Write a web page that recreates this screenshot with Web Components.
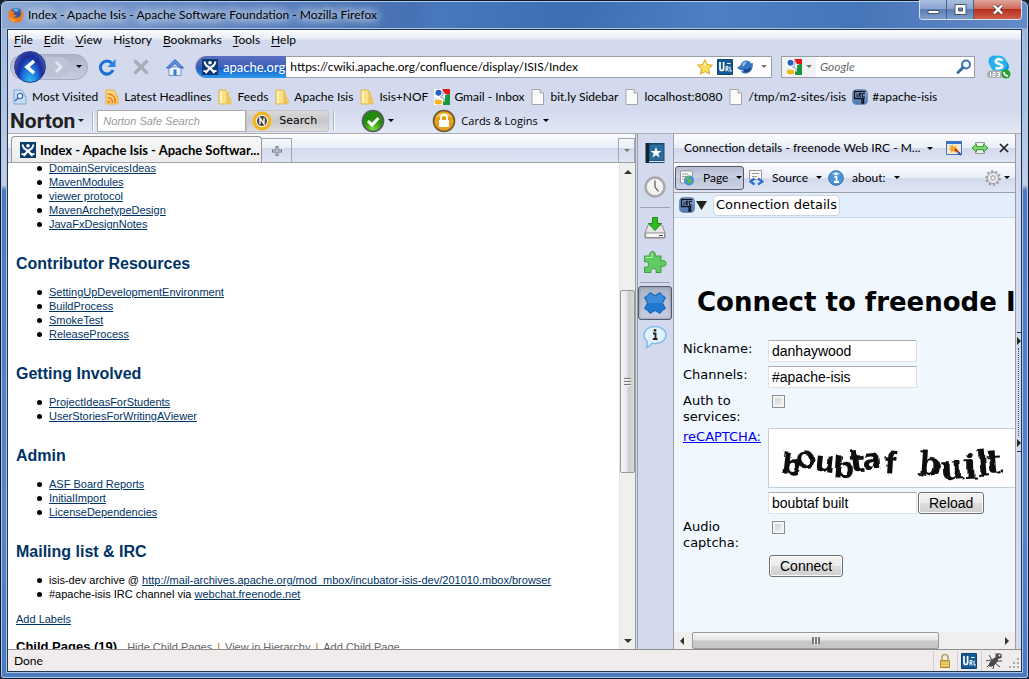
<!DOCTYPE html>
<html lang="en">
<head>
<meta charset="utf-8">
<title>Index - Apache Isis - Apache Software Foundation</title>
<style>
html,body{margin:0;height:100%;overflow:hidden;background:#14182a}
body{font:12px/16px Lato,"Open Sans",sans-serif;color:#000;--chrome:#d3daed;--line:#a3a6ad;--bar:linear-gradient(#fdfdff 0,#e9eef8 50%,#d2d9ec 50%,#dfe5f4 100%)}
</style>
</head>
<body>
<app-window></app-window>
<script>
const BASE = `*{box-sizing:border-box}button{font:inherit;color:inherit;background:none;border:0;padding:0;margin:0;display:flex;align-items:center;white-space:nowrap}input{font:inherit;margin:0;min-width:0}`;
function define(name, css, html) {
  customElements.define(name, class extends HTMLElement {
    constructor() {
      super();
      this.attachShadow({mode: 'open'});
    }
    connectedCallback() {
      this.shadowRoot.innerHTML = `<style>${BASE}${css}</style>${typeof html === 'function' ? html(this) : html}`;
    }
  });
}

const google = `<path d="M0 0h16v16H0z" fill="#fff"/><path d="M8 0h8v6l-5-1z" fill="#e8161b"/><path d="M11 6l5-1v11h-7v-3q3-3 2-7z" fill="#16963f"/><path d="M0 8l5 1-2 4-3 1z" fill="#e4ebf3"/><circle cx="4.500" cy="3.800" r="3" fill="#2a5fc0"/><ellipse cx="4.500" cy="13" rx="3.800" ry="2.500" fill="#f6b61c"/><path d="M8 2c2 2 1 4-1 6 3 1 4 3 3 5" stroke="#9fb8dc" stroke-width="1.400" fill="none"/>`;
const folder = `<path d="M2 1h7l1 2v12H2z" fill="#fbe08a" stroke="#e0b84c"/><path d="M10 3h2v12h-2z" fill="#eec458"/><path d="M12 8l2 2v5h-2z" fill="#f9dc85" stroke="#dfb54a" stroke-width=".8"/><path d="M3 2h2v12H3z" fill="#fff2bd"/>`;
const page = `<path d="M2 .5h8l3.500 3.500v11.500H2z" fill="#fafafa" stroke="#a5a5a5"/><path d="M10 .5V4h3.500" fill="#e2e2e2" stroke="#a5a5a5"/>`;
const urlIcon = `<rect width="16" height="16" rx="1" fill="#155a92"/><rect x=".5" y=".5" width="15" height="15" rx="1" fill="none" stroke="#0d4474"/><path d="M3 3v6.500q0 2 1.800 2t1.800-2V3" stroke="#fff" stroke-width="1.700" fill="none"/><path d="M10 4.500h3.500M9 12.500v-5h2v2.500H9M10 10l1.500 2.500M13 7.500V12h2" stroke="#fff" fill="none"/>`;
const irc = `<defs><linearGradient id="i" x2="0" y2="1"><stop stop-color="#93abcf"/><stop offset="1" stop-color="#4d74ad"/></linearGradient></defs><rect x=".5" y=".5" width="15" height="15" rx="4" fill="url(#i)" stroke="#6f8fbd"/><path d="M13.500 2.500h-11v7H10V14h1.500V9.500h1" stroke="#0d1320" stroke-width="1.300" fill="none"/><path d="M5 4.500V8M7 8V4.500h2V6H7l2 2M13 4.500h-2.500V8H13" stroke="#0d1320" fill="none"/>`;
const isis = `<rect width="16" height="16" fill="#0b3a70"/><path d="M2.500 2.500q1 5 5 5.500M13.500 2.500q-1 5-5 5.500M1.500 12q5 1 6-4M14.500 12q-5 1-6-4M3.500 14l4.500-5 4.500 5" stroke="#fff" stroke-width="1.900" fill="none"/><circle cx="8" cy="3.800" r="1.800" fill="#fff"/>`;
const ICONS = {
  firefox: [16, `<circle cx="8" cy="8" r="7" fill="#2d56a5"/><path d="M5 2q4-2 6 1l-2 2-3-1z" fill="#6aa8e0"/><path d="M1 4l1.500-2.500L4 4l3 1-2 2 4 1.500-3 1.500q3 1.500 6-.5 2-3-.5-7.500 4 2 3.800 6.500Q14.500 15.500 8 15.700 1 15.500.5 9 .4 6 1 4z" fill="#ec7a1c"/><path d="M2 9q2 5 7 4.500Q5 15 3 13z" fill="#fbc43a"/>`],
  reload: [18, `<path d="M14 5.500A6.500 6.500 0 1 0 15 12" stroke="#1a6fd8" stroke-width="3" fill="none"/><path d="M17.500 1v8h-8z" fill="#2a86ea"/>`],
  stop: [18, `<path d="M2.500 2.500l13 13M15.500 2.500l-13 13" stroke="#a9adb7" stroke-width="3.400"/>`],
  home: [18, `<path d="M3 9h12v8.500H3z" fill="#e9f2ff" stroke="#6e8fd0"/><path d="M.5 10L9 1.500 17.500 10h-3.500L9 5.500 4 10z" fill="#5b8de0" stroke="#3768bf"/><path d="M7.500 11.500h3v5.500h-3z" fill="#3f78c9"/>`],
  isis: [16, isis], google: [16, google], folder: [16, folder], page: [16, page], url: [16, urlIcon], irc: [16, irc],
  star: [16, `<path d="M8 .8l2.200 4.800 5.200.6-3.900 3.600 1.100 5.300L8 12.500l-4.600 2.600 1.100-5.300L.6 6.200l5.200-.6z" fill="#fbe05a" stroke="#d9a322"/><path d="M8 3l1.200 3.500L6 7z" fill="#fff7c0"/>`],
  bird: [16, `<path d="M0 8q3 0 4-3 2-4 6-3.500 3 .5 4 3l2-.5q0 8-5 10-5 1.500-7-1.500 2 0 2-1-4 0-6-3.500z" fill="#3474c0"/><path d="M5 5q2-3 5-2.500Q9 5 6 8z" fill="#8cc0ee"/><path d="M7 10q3 2 7-2-1 5-5 5.500-2 0-2-3.500z" fill="#163f86"/>`],
  search: [16, `<circle cx="10" cy="5.500" r="4" fill="#eef5fc" stroke="#3f74ad" stroke-width="2"/><path d="M7 8.500L2 13.500" stroke="#336699" stroke-width="2.800" stroke-linecap="round"/>`],
  skype: [24, `<circle cx="7.500" cy="6.500" r="6" fill="#1ba8ea"/><circle cx="15.500" cy="11.500" r="6.500" fill="#1597dc"/><circle cx="11.500" cy="9" r="8.500" fill="#28b1ef"/><path d="M15.500 5.500Q12 3 9.500 5T12 9t2.500 3.500-6 .5" stroke="#fff" stroke-width="2.600" fill="none"/><rect x="0" y="15.500" width="16" height="7.500" rx="3.500" fill="#a9aeb3"/><path d="M3.500 17v4.500M6 17.500h2v2H6v2h2.500M10 17.500h2.500v4H10M10.500 19.500H12" stroke="#fff" fill="none"/><circle cx="19" cy="19" r="4.500" fill="#25a22b"/><path d="M17 17q0 3.500 4 4" stroke="#fff" stroke-width="1.800" fill="none"/>`],
  visited: [16, `<path d="M2 1h8l2 3v3h2v8H2z" fill="#c5dcf2" stroke="#7ea9d3"/><circle cx="8" cy="7" r="2.600" fill="#eef6fd" stroke="#3f6fae" stroke-width="1.200"/><path d="M6 9l-3 3" stroke="#3f6fae" stroke-width="1.500"/>`],
  feed: [16, `<path d="M2 1h8l2 3v3h2v8H2z" fill="#fbd77c" stroke="#e5b14b"/><path d="M3.500 5q8 0 8 9M3.500 8.500q5 0 5 5.500" stroke="#f07f1b" stroke-width="1.700" fill="none"/><circle cx="4.800" cy="12.800" r="1.400" fill="#f07f1b"/>`],
  norton: [20, `<circle cx="10" cy="10" r="7.800" fill="#ececec" stroke="#f2b61c" stroke-width="3.200"/><circle cx="10" cy="10" r="5" fill="#4b4538"/><path d="M8 13V7.200l4 5.600V7" stroke="#fff" stroke-width="1.400" fill="none"/>`],
  ok: [24, `<defs><radialGradient id="g" cy=".9"><stop stop-color="#7fdc3a"/><stop offset="1" stop-color="#23890f"/></radialGradient></defs><circle cx="12" cy="12" r="10.500" fill="url(#g)" stroke="#55605a" stroke-width="1.600"/><path d="M7 12l4 4 6.500-7" stroke="#fff" stroke-width="3" fill="none"/>`],
  vault: [24, `<circle cx="12" cy="12" r="10.500" fill="#e5a016" stroke="#6a5a3c" stroke-width="1.600"/><path d="M4 8q8-8 16 0-8-3-16 0z" fill="#f8d77a"/><path d="M7 11h10v7H7z" fill="#fff"/><path d="M9 11V8.500q0-2.500 3-2.500t3 2.500V11" stroke="#fff" stroke-width="1.800" fill="none"/>`],
  book: [22, `<path d="M4 1h16.500v20H4z" fill="#16476f"/><path d="M5.500 2.500h14v16h-14z" fill="#2c6c98"/><path d="M1.500 1H5v20H1.500z" fill="#0f2233"/><path d="M5 19.500h15.500" stroke="#dfe8ef"/><path d="M12 5l1.400 4h4.100l-3.200 2.500 1.200 4L12 13.100l-3.500 2.400 1.200-4L6.500 9h4.100z" fill="#fff"/>`],
  clock: [24, `<circle cx="12" cy="12" r="9.500" fill="#f4f4f4" stroke="#a9a9a9" stroke-width="2.400"/><circle cx="12" cy="12" r="7.800" fill="none" stroke="#c2c2c2" stroke-dasharray="1 3.080"/><path d="M12 5.500V12l3.500 4.500" stroke="#555" stroke-width="1.200" fill="none"/>`],
  download: [24, `<path d="M5 9h14l3 8v5H2v-5z" fill="#e4e4e4" stroke="#8e8e8e"/><path d="M2.500 17h19v4.500h-19z" fill="#f8f8f8" stroke="#8e8e8e"/><path d="M16 19.500h4" stroke="#444"/><path d="M9.500 1.500h5v6h4L12 14.500 5.500 7.500h4z" fill="#2fbb1f" stroke="#1a8a12"/>`],
  puzzle: [24, `<path d="M1.500 6h5.500Q6 1.500 9.500 1.500T12 6h6v5q5-1.500 5 2.500T18 16v6.500h-5q1-4-2.500-4t-2.500 4H1.500V17q4 1 4-2.500t-4-2.500z" fill="#5fcb60" stroke="#3b9f40"/><path d="M3 7.500h6V3" stroke="#b4efb2" fill="none"/>`],
  cross: [24, `<path d="M7 1.500l5 3 5-3 2.500 3 3 2-3 5.500 3 5.500-3 2-2.500 3-5-3-5 3-2.500-3-3-2 3-5.500-3-5.500 3-2z" fill="#1f78cf" stroke="#1763b4"/><path d="M7 2.500l5 3 5-3 4 4.500-2.500 5h-13L3 7z" fill="#3a8bd9"/>`],
  bubble: [24, `<path d="M12 1.500c6 0 11 3.500 11 8.500s-5 8.500-11 8.500q-1.500 0-3-.3-2 3.500-5.500 4.300 1.500-3 .7-6Q1 14 1 10c0-5 5-8.500 11-8.500z" fill="#e2f3fd" stroke="#7fc0ea" stroke-width="1.500"/><path d="M10 8.500h2.500V14M9.800 14h4.700" stroke="#222" stroke-width="1.800" fill="none"/><circle cx="12" cy="5.300" r="1.400" fill="#222"/>`],
  window: [16, `<path d="M.5 1.500h15v13H.5z" fill="#f5ead0" stroke="#3a72cf"/><path d="M0 1h16v3H0z" fill="#3a72cf"/><path d="M6.500 4l1 3 3-1.500L9.500 8l3 1.500-3 .5.5 3-3-2-2.500 2 .5-3-3-1 3-1L3.500 5l2.500 1z" fill="#f1a32c"/><path d="M9 9l3 3" stroke="#b3302c" stroke-width="2"/><path d="M12 12l3 3" stroke="#2f55a8" stroke-width="2"/>`],
  resize: [16, `<path d="M3.500 5V2.500h9V5M3.500 11v2.500h9V11" fill="#eee" stroke="#999"/><path d="M0 8l4.500-4v2.500h7V4L16 8l-4.500 4V9.500h-7V12z" fill="#7fd672" stroke="#3ba235"/>`],
  close: [10, `<path d="M1 1l8 8M9 1L1 9" stroke="#222" stroke-width="1.700"/>`],
  pageglobe: [16, `<path d="M1.500 1h12v12h-12z" fill="#fafafa" stroke="#999"/><path d="M3 4h6M3 6.500h4M3 9h2" stroke="#999"/><circle cx="10" cy="10.500" r="5" fill="#3f8fdd"/><path d="M7 8q2-3 4-2l-1 3 3 1-1 4-3-1z" fill="#64b94a"/>`],
  source: [16, `<path d="M1.500.5h12v9h-12z" fill="#fafafa" stroke="#999"/><path d="M4 3.500h7M4 6.500h5" stroke="#999"/><path d="M6.500 8.500l-4 3 4 3M10 8.500l4.500 3-4.500 3" stroke="#2a6fd0" stroke-width="2.200" fill="none"/>`],
  info: [16, `<circle cx="8" cy="8" r="7.300" fill="#4c94d6" stroke="#2c6fb3"/><path d="M4 4q4-4 8 0-4 2-8 0z" fill="#b8dbf5"/><path d="M6.500 7h2v5M6 12h5" stroke="#fff" stroke-width="1.800" fill="none"/><circle cx="8" cy="4.300" r="1.200" fill="#fff"/>`],
  gear: [16, `<circle cx="8" cy="8" r="6.900" fill="none" stroke="#999" stroke-width="1.800" stroke-dasharray="2.200 2.140"/><circle cx="8" cy="8" r="5.500" fill="#eceef3" stroke="#999"/><circle cx="8" cy="8" r="2.300" fill="none" stroke="#999"/>`],
  lock: [16, `<path d="M3.500 7.500h9v7h-9z" fill="#dcb64a" stroke="#b18b2a"/><path d="M5 7.500V4.500q0-3 3-3t3 3v3" stroke="#b9a468" stroke-width="1.700" fill="none"/><path d="M4 10h8M4 12.500h8" stroke="#f3dc93"/>`],
  bug: [18, `<ellipse cx="8.500" cy="10" rx="2.800" ry="6" transform="rotate(45 8.500 10)" fill="#4a4a4a"/><path d="M1 9l5-1M2 15l4-4M4 3l3 5M8 17l1-5M15 15l-5-4M17 9l-6 0M11 1l0 6" stroke="#444" fill="none"/><circle cx="14" cy="4" r="2.800" fill="#444"/><circle cx="14.500" cy="3.500" r="1" fill="#fff"/>`],
  plus: [10, `<path d="M5 0v10M0 5h10" stroke="#777c88" stroke-width="3"/><path d="M5 1v8M1 5h8" stroke="#d9dce4"/>`]
};
define('ui-icon', `:host{display:inline-flex;flex:none}svg{display:block}`,
  el => { const [s, d] = ICONS[el.getAttribute('name')]; return `<svg width="${s}" height="${s}" viewBox="0 0 ${s} ${s}" aria-hidden="true">${d}</svg>`; });

define('drop-arrow', `:host{display:inline-block;flex:none;border:solid transparent;border-width:3px 3px 0;border-top-color:currentColor}`, '');

define('title-bar', `
:host{display:flex;height:29px;padding-left:8px;color:#000}
.t{flex:1;display:flex;align-items:center;gap:4px;min-width:0}
.t span{white-space:nowrap;text-shadow:0 0 8px #e8f0fb,0 0 10px #dce8f8,0 0 12px #dce8f8}
.c{display:flex;height:20px;margin-right:7px;border:1px solid #d6e2f4;border-top:0;border-radius:0 0 4px 4px;overflow:hidden}
button{justify-content:center;width:27px;border-right:1px solid #46618f;background:linear-gradient(#aabfe0 0,#8ca6cf 45%,#5b7db3 50%,#7f9fcb 100%)}
.x{width:47px;border:0;background:linear-gradient(#e0a59a 0,#cf6c5c 45%,#b52e1c 50%,#d1604c 100%)}`,
`<div class="t"><ui-icon name="firefox"></ui-icon><span>Index - Apache Isis - Apache Software Foundation - Mozilla Firefox</span></div>
<div class="c"><button aria-label="Minimize"><svg width="13" height="11"><path d="M1 6.500h11v3H1z" fill="#fff" stroke="#4b5467"/></svg></button><button aria-label="Maximize"><svg width="13" height="11"><path d="M1 .5h11v10H1zM4.500 4h4v3h-4z" fill="#fff" fill-rule="evenodd" stroke="#4b5467"/></svg></button><button class="x" aria-label="Close"><svg width="12" height="11"><path d="M2 1.500l8 8M10 1.500l-8 8" stroke="#5d4a4e" stroke-width="4"/><path d="M2 1.500l8 8M10 1.500l-8 8" stroke="#fff" stroke-width="2.400"/></svg></button></div>`);

define('menu-bar', `:host{display:flex;align-items:center;gap:11px;height:20px;padding-left:6px;background:linear-gradient(#fdfdff 0,#e7ecf6 45%,var(--chrome) 50%)}u{text-underline-offset:2px}`,
`<button><span><u>F</u>ile</span></button><button><span><u>E</u>dit</span></button><button><span><u>V</u>iew</span></button><button><span>Hi<u>s</u>tory</span></button><button><span><u>B</u>ookmarks</span></button><button><span><u>T</u>ools</span></button><button><span><u>H</u>elp</span></button>`);

define('nav-bar', `
:host{display:flex;align-items:center;height:33px;padding:0 10px 0 2px}
.pill{display:flex;align-items:center;width:78px;height:26px;border-radius:13px;background:linear-gradient(#aeb5c8,#c6cddf);border:1px solid #a5adc2}
.back{flex:none;width:32px;height:32px;margin-left:3px;border-radius:50%;justify-content:center;background:radial-gradient(ellipse at 50% 110%,#35c8f5 0,#1b6fd8 40%,#1c2c9c 62%,#5b6fc4 100%);border:1px solid #2a3a8c}
.fwd{width:24px;height:20px;justify-content:center;background:#bcc3d4;border-radius:0 10px 10px 0;margin-right:6px}
.tools{display:flex;gap:16px;margin:0 11px 0 10px}
.field{display:flex;align-items:center;height:22px;background:#fff;border:1px solid #9a9da5}
.url{flex:1;gap:4px;padding-right:3px;border-radius:11px 0 0 11px;margin-right:9px}
.id{height:22px;gap:5px;padding:0 1px 0 6px;color:#fff;font-size:13px;border-radius:11px 0 0 11px;background:linear-gradient(#5c6fc0 0,#3f5db8 50%,#1c5cc4 55%,#2a9af0 100%)}
input{flex:1;border:0;outline:0;padding:0;background:none}
.url drop-arrow{margin:0 1px 0 4px;color:#777}
.s{width:194px}.s button{height:20px;padding:0 4px;gap:4px;background:#f1f2f6;margin-right:4px;color:#777}
.s input{font-style:italic}.s input::placeholder{color:#666;opacity:1}.s>ui-icon{margin-right:2px}
.sk{margin-left:12px}`,
`<div class="pill"><button class="back" aria-label="Back"><svg width="14" height="16"><path d="M11 2L4 8l7 6" stroke="#fff" stroke-width="3.600" fill="none"/></svg></button><button class="fwd" aria-label="Forward"><svg width="9" height="12"><path d="M2 1l5 5-5 5" stroke="#e4e8f1" stroke-width="2.800" fill="none"/></svg></button><drop-arrow></drop-arrow></div>
<div class="tools"><button aria-label="Reload"><ui-icon name="reload"></ui-icon></button><button aria-label="Stop"><ui-icon name="stop"></ui-icon></button><button aria-label="Home"><ui-icon name="home"></ui-icon></button></div>
<div class="field url"><button class="id"><ui-icon name="isis"></ui-icon>apache.org</button><input aria-label="Location" value="https://cwiki.apache.org/confluence/display/ISIS/Index"><ui-icon name="star"></ui-icon><ui-icon name="url"></ui-icon><ui-icon name="bird"></ui-icon><drop-arrow></drop-arrow></div>
<div class="field s"><button aria-label="Search engine"><ui-icon name="google"></ui-icon><drop-arrow></drop-arrow></button><input aria-label="Search" placeholder="Google"><ui-icon name="search"></ui-icon></div>
<button class="sk" aria-label="Skype"><ui-icon name="skype"></ui-icon></button>`);

define('bookmark-item', `:host{display:flex}a{display:flex;gap:4px;align-items:center;color:inherit;text-decoration:none;white-space:nowrap}`,
  el => `<a href="#"><ui-icon name="${el.getAttribute('icon')}"></ui-icon><slot></slot></a>`);
define('bookmark-bar', `:host{display:flex;align-items:center;gap:6px;height:27px;padding-left:4px}`,
`<bookmark-item icon="visited">Most Visited</bookmark-item><bookmark-item icon="feed">Latest Headlines</bookmark-item><bookmark-item icon="folder">Feeds</bookmark-item><bookmark-item icon="folder">Apache Isis</bookmark-item><bookmark-item icon="folder">Isis+NOF</bookmark-item><bookmark-item icon="google">Gmail - Inbox</bookmark-item><bookmark-item icon="page">bit.ly Sidebar</bookmark-item><bookmark-item icon="page">localhost:8080</bookmark-item><bookmark-item icon="page">/tmp/m2-sites/isis</bookmark-item><bookmark-item icon="irc">#apache-isis</bookmark-item>`);

define('norton-bar', `
:host{display:flex;align-items:center;height:24px;padding:0 0 2px 2px;background:linear-gradient(var(--chrome),#e2e7f5);border-bottom:1px solid #a9adb8}
.logo{font:bold 21px/22px Roboto,sans-serif;color:#222;gap:3px}
i{width:2px;height:20px;border-left:1px solid #a9aeba;border-right:1px solid #fff;margin:0 3px 0 8px}
input{width:149px;height:22px;border:1px solid #aaa;padding:0 5px;font:italic 11px "Liberation Sans",sans-serif;background:#fff}
input::placeholder{color:#999;opacity:1}
.go{width:83px;height:22px;gap:7px;padding-left:5px;font:11px "DejaVu Sans",sans-serif;background:linear-gradient(#d9d9d9,#c9c8c8 50%,#dcdcdc);border:1px solid #c4c4c8;border-radius:0 3px 3px 0}
.sep{margin:0 26px 0 4px}.ok{gap:3px;margin-right:38px}.v{gap:5px;font:11px "Open Sans",sans-serif}`,
`<button class="logo">Norton<drop-arrow></drop-arrow></button><i></i><input aria-label="Norton Safe Search" placeholder="Norton Safe Search"><button class="go"><ui-icon name="norton"></ui-icon>Search</button><i class="sep"></i><button class="ok" aria-label="Site is safe"><ui-icon name="ok"></ui-icon><drop-arrow></drop-arrow></button><button class="v"><ui-icon name="vault"></ui-icon>Cards &amp; Logins<drop-arrow></drop-arrow></button>`);

define('tab-strip', `
:host{display:flex;align-items:flex-end;height:29px;padding-left:3px;background:var(--bar);border-bottom:1px solid #9c9fa6}
.tab{height:26px;gap:4px;padding:0 6px 0 8px;font:bold 13px/16px Lato,sans-serif;background:linear-gradient(#f7f7f7,#ececec);border:1px solid #93969d;border-bottom:0;border-radius:4px 4px 0 0;width:251px}
.new{width:30px;height:24px;justify-content:center;border:1px solid #a3a6ae;border-left:0;border-bottom:0}
.all{width:17px;height:24px;justify-content:center;margin-left:auto;border:1px solid #a3a6ae;border-bottom:0;color:#777}`,
`<button class="tab"><ui-icon name="isis"></ui-icon>Index - Apache Isis - Apache Softwar...</button><button class="new" aria-label="New tab"><ui-icon name="plus"></ui-icon></button><button class="all" aria-label="List all tabs"><drop-arrow></drop-arrow></button>`);

define('scroll-bar', `
:host{display:flex;flex:none;width:16px;flex-direction:column;background:#efefef;border-left:1px solid #e2e2e2}
:host([horizontal]){width:auto;height:17px;flex-direction:row;border-left:0}
b{flex:none;width:16px;height:17px;display:grid;place-items:center}
b::before{content:"";border:solid transparent;border-width:0 4px 4px;border-bottom-color:#333}
.dn::before{border-width:4px 4px 0;border-top-color:#333}
:host([horizontal]) .up::before{border:solid transparent;border-width:4px 4px 4px 0;border-right-color:#333}
:host([horizontal]) .dn::before{border:solid transparent;border-width:4px 0 4px 4px;border-left-color:#333}
.th{display:grid;place-items:center;border:1px solid #989898;border-radius:2px;background:linear-gradient(90deg,#f6f6f6,#e6e6e8 45%,#cfcfd2 55%,#d6d6d9)}
:host([horizontal]) .th{background:linear-gradient(#f6f6f6,#e6e6e8 45%,#cacacd 55%,#c6c6c9)}
.th::before{content:"";width:7px;height:8px;background:repeating-linear-gradient(#777 0 1px,#f4f4f4 1px 2px,transparent 2px 3px)}
:host([horizontal]) .th::before{width:8px;height:7px;background:repeating-linear-gradient(90deg,#777 0 2px,#f4f4f4 2px 3px)}`,
  el => { const [a, t, z] = el.getAttribute('parts').split(' '); return `<b class="up"></b><span style="flex:${a}"></span><span class="th" style="flex:${t}"></span><span style="flex:${z}"></span><b class="dn"></b>`; });

const LINK = `a{color:#036;text-decoration:underline;text-underline-offset:1px}`;
define('wiki-section', `:host{display:block}h2{margin:24px 0 12px;font:bold 16px/18px "Liberation Sans",sans-serif;color:#036}
ul{list-style:none;margin:0;padding:0 0 0 33px}`,
  el => `${el.hasAttribute('heading') ? `<h2>${el.getAttribute('heading')}</h2>` : ''}<ul><slot></slot></ul>`);
define('wiki-page', `
:host{display:block;flex:1;min-width:0;overflow:hidden;background:#fff;padding-left:8px;font:11px/14px "Liberation Sans",sans-serif}
${LINK}li{list-style:none;white-space:nowrap}wiki-section:first-of-type{margin-top:-2px}
li::before{content:"";display:inline-block;width:5px;height:5px;border-radius:50%;background:#000;margin:0 7px 1px -12px}
p{margin:11px 0 12px}.kids{display:flex;align-items:baseline;gap:10px;line-height:18px;white-space:nowrap;color:#c60}
.kids h3{margin:0;font:bold 13px/18px "Liberation Sans",sans-serif;color:#000}.kids span{display:flex;gap:5px}.kids a{color:#666}`,
`<wiki-section><li><a href="#">DomainServicesIdeas</a></li><li><a href="#">MavenModules</a></li><li><a href="#">viewer protocol</a></li><li><a href="#">MavenArchetypeDesign</a></li><li><a href="#">JavaFxDesignNotes</a></li></wiki-section>
<wiki-section heading="Contributor Resources"><li><a href="#">SettingUpDevelopmentEnvironment</a></li><li><a href="#">BuildProcess</a></li><li><a href="#">SmokeTest</a></li><li><a href="#">ReleaseProcess</a></li></wiki-section>
<wiki-section heading="Getting Involved"><li><a href="#">ProjectIdeasForStudents</a></li><li><a href="#">UserStoriesForWritingAViewer</a></li></wiki-section>
<wiki-section heading="Admin"><li><a href="#">ASF Board Reports</a></li><li><a href="#">InitialImport</a></li><li><a href="#">LicenseDependencies</a></li></wiki-section>
<wiki-section heading="Mailing list &amp; IRC"><li>isis-dev archive @ <a href="#">http://mail-archives.apache.org/mod_mbox/incubator-isis-dev/201010.mbox/browser</a></li><li>#apache-isis IRC channel via <a href="#">webchat.freenode.net</a></li></wiki-section>
<p><a href="#">Add Labels</a></p>
<div class="kids"><h3>Child Pages (19)</h3><span><a href="#">Hide Child Pages</a>|<a href="#">View in Hierarchy</a>|<a href="#">Add Child Page</a></span></div>`);

define('side-rail', `
:host{display:flex;flex-direction:column;flex:none;width:36px;padding:2px 1px 0 0;background:var(--chrome);border-left:1px solid #9a9da5}
button{height:34px;justify-content:center;flex:none}
.on{border:1px solid #55596a;border-radius:3px;background:linear-gradient(#aab1c4,#c9d0e3);box-shadow:inset 0 0 3px #7d8499}
hr{width:30px;margin:3px auto;border:0;border-top:1px solid #9da2b0;flex:none}`,
`<button aria-label="Bookmarks"><ui-icon name="book"></ui-icon></button><button aria-label="History"><ui-icon name="clock"></ui-icon></button><hr><button aria-label="Downloads"><ui-icon name="download"></ui-icon></button><button aria-label="Add-ons"><ui-icon name="puzzle"></ui-icon></button><hr><button class="on" aria-label="Web panel"><ui-icon name="cross"></ui-icon></button><button aria-label="Page info"><ui-icon name="bubble"></ui-icon></button>`);

define('irc-form', `
:host{display:block;flex:1;overflow:hidden;background:#f0f7ff;padding:68px 0 0 9px;font:13px/16px "DejaVu Sans",sans-serif}
h1{margin:0 0 22px 14px;font:bold 26px/32px "DejaVu Sans",sans-serif;white-space:nowrap}
form{display:grid;grid-template-columns:85px 1fr;gap:4px 0;align-items:start}
label,a{padding-top:1px;margin-bottom:-1px}a{color:#00e}
input[type=text]{width:149px;height:22px;border:1px solid #dfe2e8;border-top-color:#abadb3;padding:1px 3px;background:#fff;font:14px "Liberation Sans",sans-serif}
input[type=checkbox]{appearance:none;width:13px;height:13px;margin:3px 4px;border:1px solid #8e8f8f;background:linear-gradient(135deg,#c8ccd2,#f4f5f6);box-shadow:inset 0 0 0 2px #f4f4f4}
button{height:22px;padding:0 10px;border:1px solid #707070;border-radius:3px;background:linear-gradient(#f3f3f3 0,#ebebeb 50%,#ddd 50%,#cfcfcf);box-shadow:inset 0 0 0 1px #fbfbfb;font:14px "Liberation Sans",sans-serif}
.cap{height:60px;border:1px solid #c3cfdd;border-right:0;background:#fff;overflow:hidden}.cap svg{display:block}
.row{display:flex;gap:1px}.go{justify-self:start;margin:1px 0 0 1px}`,
`<h1>Connect to freenode I</h1>
<form onsubmit="return false">
<label for="n">Nickname:</label><input type="text" id="n" value="danhaywood">
<label for="c">Channels:</label><input type="text" id="c" value="#apache-isis">
<label for="a">Auth to services:</label><input type="checkbox" id="a">
<a href="#">reCAPTCHA:</a><div class="cap"><svg width="246" height="57" role="img" aria-label="captcha"><defs><filter id="w" x="-10%" y="-20%" width="120%" height="140%"><feTurbulence type="fractalNoise" baseFrequency=".07" numOctaves="2" seed="4"/><feDisplacementMap in="SourceGraphic" scale="5"/></filter></defs>
<g filter="url(#w)" fill="#0a0a0a"><text font-family="DejaVu Sans" font-size="29" font-weight="bold" x="11 28 45 64 82 94 114" y="44 40 42 48 43 41 43" rotate="6 -8 6 4 -6 -4 4">boubtaf</text>
<text font-family="DejaVu Serif" font-size="34" font-weight="bold" x="148 171 195 208 218" y="46 50 49 47 45" rotate="4 -2 -2 -4 -4">built</text></g></svg></div>
<span></span><div class="row"><input type="text" aria-label="Captcha answer" value="boubtaf built"><button type="button">Reload</button></div>
<label for="u">Audio captcha:</label><input type="checkbox" id="u">
<span></span><button class="go">Connect</button>
</form>`);

define('side-panel', `
:host{display:flex;flex-direction:column;flex:none;width:343px;border:solid #9a9da5;border-width:0 1px}
.h,.b{display:flex;align-items:center;background:var(--bar);border-bottom:1px solid #9c9fa6;flex:none}
.h{height:29px;padding:0 7px 0 10px;white-space:nowrap}.h drop-arrow{margin:0 13px 0 7px}.h button+button{margin-left:10px}.h .x{margin-left:11px}
.b{height:30px;padding:0 5px 0 1px}.b button{height:24px;gap:7px}.b .on{width:69px;gap:8px;padding:0 3px;border:1px solid #55596a;border-radius:3px;background:linear-gradient(#b5bccd,#ccd3e4 50%,#bcc4d8 50%,#cdd4e6);margin-right:4px}
.b .src{gap:8px;margin-right:6px}.b .info{gap:8px}.b .g{margin-left:auto;gap:3px}
.t{display:flex;align-items:center;gap:1px;height:25px;padding-left:5px;background:#e2effb;border-bottom:1px solid #c5d7ea;font:13px/18px "DejaVu Sans",sans-serif;flex:none}
.t svg{margin-right:5px}.t span{height:21px;padding:0 2px;background:#fff;border:1px solid #c9d6e5;border-radius:4px;white-space:nowrap}`,
`<div class="h">Connection details - freenode Web IRC - M...<drop-arrow></drop-arrow><button aria-label="Open in window"><ui-icon name="window"></ui-icon></button><button aria-label="Fit width"><ui-icon name="resize"></ui-icon></button><button class="x" aria-label="Close panel"><ui-icon name="close"></ui-icon></button></div>
<div class="b"><button class="on"><ui-icon name="pageglobe"></ui-icon>Page<drop-arrow></drop-arrow></button><button class="src"><ui-icon name="source"></ui-icon>Source<drop-arrow></drop-arrow></button><button class="info"><ui-icon name="info"></ui-icon>about:<drop-arrow></drop-arrow></button><button class="g" aria-label="Settings"><ui-icon name="gear"></ui-icon><drop-arrow></drop-arrow></button></div>
<div class="t"><ui-icon name="irc"></ui-icon><svg width="11" height="9"><path d="M0 0h11L5.500 9z" fill="#222"/></svg><span>Connection details</span></div>
<irc-form></irc-form><scroll-bar horizontal parts="2 247 60"></scroll-bar>`);

define('panel-grip', `:host{display:flex;flex:none;width:5px;background:var(--chrome);justify-content:center}
div{flex:none;align-self:center;width:4px;height:120px;border:solid #333;border-width:1px 0;display:flex;flex-direction:column;align-items:center;padding:4px 0}
div::before,div::after{content:"";border:solid transparent;border-width:4px 0 4px 4px;border-left-color:#222}
i{flex:1;border-left:1px dotted #555;margin:3px 0}`, `<div><i></i></div>`);

define('status-bar', `:host{display:flex;align-items:center;height:22px;padding-left:6px;background:#f0eceb;border-top:1px solid #8e8e90;flex:none}
span{flex:1}button{height:20px;padding:0 4px 0 3px;border-left:1px solid #d2cecd}svg{align-self:flex-end}`,
`<span>Done</span><button aria-label="Secure"><ui-icon name="lock"></ui-icon></button><button aria-label="Shorten URL"><ui-icon name="url"></ui-icon></button><button aria-label="Debugger"><ui-icon name="bug"></ui-icon></button><svg width="14" height="14"><path d="M10 2h2M10 6h2M10 10h2M6 6h2M6 10h2M2 10h2" stroke="#aaa" stroke-width="2"/></svg>`);

define('app-window', `
:host{display:flex;flex-direction:column;height:100vh;overflow:hidden;border-radius:7px 7px 4px 4px;box-shadow:inset 0 0 0 1px #131722,inset 0 0 0 2px #a9cdf2;
background:linear-gradient(transparent 28px,#9db7de 29px,#c3d0e6 185px,#4b7abf 190px,#5685c8 75%,#4b7abf),linear-gradient(100deg,#8fa9d3 0,#6e90c8 12%,#4671b4 36%,#4a78bd 38%,#3f6db2 50%,#4f7ec2 62%,#4675b9 75%,#7a9ad0 100%)}
main{flex:1;min-height:0;margin:0 7px 7px;border:1px solid #23344f;display:flex;flex-direction:column;background:var(--chrome);box-shadow:0 0 0 1px #a9c4e6}
.mid{flex:1;min-height:0;display:flex}.left{flex:1;min-width:0;display:flex;flex-direction:column;border-right:1px solid #9a9da5;margin-right:1px}.view{flex:1;min-height:0;display:flex}`,
`<title-bar></title-bar><main><menu-bar></menu-bar><nav-bar></nav-bar><bookmark-bar></bookmark-bar><norton-bar></norton-bar>
<div class="mid"><div class="left"><tab-strip></tab-strip><div class="view"><wiki-page></wiki-page><scroll-bar parts="111 183 160"></scroll-bar></div></div><side-rail></side-rail><side-panel></side-panel><panel-grip></panel-grip></div>
<status-bar></status-bar></main>`);
</script>
</body>
</html>
